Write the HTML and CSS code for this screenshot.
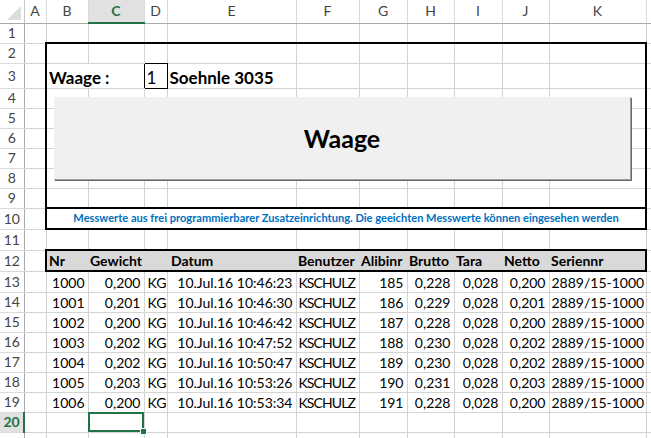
FILE: index.html
```html
<!DOCTYPE html>
<html lang="de">
<head>
<meta charset="utf-8">
<title>Waage</title>
<link rel="stylesheet" href="styles.css">
</head>
<body>
<div class="sheet">
<table class="grid">
<colgroup>
<col class="w-rh"><col class="w-a"><col class="w-b"><col class="w-c"><col class="w-d"><col class="w-e"><col class="w-f"><col class="w-g"><col class="w-h"><col class="w-i"><col class="w-j"><col class="w-k"><col class="w-l">
</colgroup>
<tr class="h-hdr">
<th class="corner"><svg width="14" height="14" viewBox="0 0 14 14"><polygon points="14,0 14,14 0,14" fill="#dcdcdc"/></svg></th>
<th class="ch">A</th><th class="ch">B</th><th class="ch csel">C</th><th class="ch">D</th><th class="ch">E</th><th class="ch">F</th><th class="ch">G</th><th class="ch">H</th><th class="ch">I</th><th class="ch">J</th><th class="ch">K</th><th class="ch"></th>
</tr>
<tr class="h20"><th class="rh">1</th><td></td><td></td><td></td><td></td><td></td><td></td><td></td><td></td><td></td><td></td><td></td><td></td></tr>
<tr class="h20"><th class="rh">2</th><td></td><td class="bl bt"></td><td class="bt"></td><td class="bt bbk"></td><td class="bt"></td><td class="bt"></td><td class="bt"></td><td class="bt"></td><td class="bt"></td><td class="bt"></td><td class="bt br2"></td><td></td></tr>
<tr class="h25"><th class="rh">3</th><td></td><td class="bl brk lbl" colspan="2">Waage :</td><td class="box">1</td><td class="lbl">Soehnle 3035</td><td></td><td></td><td></td><td></td><td></td><td class="br2"></td><td></td></tr>
<tr class="h20"><th class="rh">4</th><td></td><td class="bl"></td><td></td><td></td><td></td><td></td><td></td><td></td><td></td><td></td><td class="br2"></td><td></td></tr>
<tr class="h20"><th class="rh">5</th><td></td><td class="bl"></td><td></td><td></td><td></td><td></td><td></td><td></td><td></td><td></td><td class="br2"></td><td></td></tr>
<tr class="h20"><th class="rh">6</th><td></td><td class="bl"></td><td></td><td></td><td></td><td></td><td></td><td></td><td></td><td></td><td class="br2"></td><td></td></tr>
<tr class="h20"><th class="rh">7</th><td></td><td class="bl"></td><td></td><td></td><td></td><td></td><td></td><td></td><td></td><td></td><td class="br2"></td><td></td></tr>
<tr class="h20"><th class="rh">8</th><td></td><td class="bl"></td><td></td><td></td><td></td><td></td><td></td><td></td><td></td><td></td><td class="br2"></td><td></td></tr>
<tr class="h20"><th class="rh">9</th><td></td><td class="bl bb2"></td><td class="bb2"></td><td class="bb2"></td><td class="bb2"></td><td class="bb2"></td><td class="bb2"></td><td class="bb2"></td><td class="bb2"></td><td class="bb2"></td><td class="bb2 br2"></td><td></td></tr>
<tr class="h21"><th class="rh">10</th><td></td><td class="note" colspan="10">Messwerte aus frei programmierbarer Zusatzeinrichtung. Die geeichten Messwerte können eingesehen werden</td><td></td></tr>
<tr class="h21"><th class="rh">11</th><td></td><td></td><td></td><td></td><td></td><td></td><td></td><td></td><td></td><td></td><td></td><td></td></tr>
<tr class="h21"><th class="rh">12</th><td></td><td class="hc bl">Nr</td><td class="hc">Gewicht</td><td class="hc"></td><td class="hc hd">Datum</td><td class="hc">Benutzer</td><td class="hc">Alibinr</td><td class="hc">Brutto</td><td class="hc">Tara</td><td class="hc">Netto</td><td class="hc br2">Seriennr</td><td></td></tr>
<tr class="h21"><th class="rh">13</th><td></td><td class="n">1000</td><td class="n">0,200</td><td>KG</td><td class="n">10.Jul.16 10:46:23</td><td class="u k">KSCHULZ</td><td class="n">185</td><td class="n">0,228</td><td class="n">0,028</td><td class="n">0,200</td><td class="u">2889/15-1000</td><td></td></tr>
<tr class="h20"><th class="rh">14</th><td></td><td class="n">1001</td><td class="n">0,201</td><td>KG</td><td class="n">10.Jul.16 10:46:30</td><td class="u k">KSCHULZ</td><td class="n">186</td><td class="n">0,229</td><td class="n">0,028</td><td class="n">0,201</td><td class="u">2889/15-1000</td><td></td></tr>
<tr class="h20"><th class="rh">15</th><td></td><td class="n">1002</td><td class="n">0,200</td><td>KG</td><td class="n">10.Jul.16 10:46:42</td><td class="u k">KSCHULZ</td><td class="n">187</td><td class="n">0,228</td><td class="n">0,028</td><td class="n">0,200</td><td class="u">2889/15-1000</td><td></td></tr>
<tr class="h20"><th class="rh">16</th><td></td><td class="n">1003</td><td class="n">0,202</td><td>KG</td><td class="n">10.Jul.16 10:47:52</td><td class="u k">KSCHULZ</td><td class="n">188</td><td class="n">0,230</td><td class="n">0,028</td><td class="n">0,202</td><td class="u">2889/15-1000</td><td></td></tr>
<tr class="h20"><th class="rh">17</th><td></td><td class="n">1004</td><td class="n">0,202</td><td>KG</td><td class="n">10.Jul.16 10:50:47</td><td class="u k">KSCHULZ</td><td class="n">189</td><td class="n">0,230</td><td class="n">0,028</td><td class="n">0,202</td><td class="u">2889/15-1000</td><td></td></tr>
<tr class="h20"><th class="rh">18</th><td></td><td class="n">1005</td><td class="n">0,203</td><td>KG</td><td class="n">10.Jul.16 10:53:26</td><td class="u k">KSCHULZ</td><td class="n">190</td><td class="n">0,231</td><td class="n">0,028</td><td class="n">0,203</td><td class="u">2889/15-1000</td><td></td></tr>
<tr class="h20"><th class="rh">19</th><td></td><td class="n">1006</td><td class="n">0,200</td><td>KG</td><td class="n">10.Jul.16 10:53:34</td><td class="u k">KSCHULZ</td><td class="n">191</td><td class="n">0,228</td><td class="n">0,028</td><td class="n">0,200</td><td class="u">2889/15-1000</td><td></td></tr>
<tr class="h20"><th class="rh rsel">20</th><td></td><td></td><td class="sel"></td><td></td><td></td><td></td><td></td><td></td><td></td><td></td><td></td><td></td></tr>
<tr class="h20"><th class="rh"></th><td></td><td></td><td></td><td></td><td></td><td></td><td></td><td></td><td></td><td></td><td></td><td></td></tr>
</table>
<div class="btn">Waage</div>
</div>
</body>
</html>
```
FILE: styles.css
```css
html, body {
  margin: 0;
  padding: 0;
  background: #ffffff;
  overflow: hidden;
}
.sheet {
  position: relative;
  width: 651px;
  height: 438px;
  overflow: hidden;
}
.grid {
  border-collapse: collapse;
  table-layout: fixed;
  width: 706px;
  font-family: Lato, "Open Sans", sans-serif;
  font-size: 14px;
  color: #000;
}
.w-rh { width: 24px; }
.w-a { width: 22px; }
.w-b { width: 42px; }
.w-c { width: 56px; }
.w-d { width: 23px; }
.w-e { width: 129px; }
.w-f { width: 63px; }
.w-g { width: 48px; }
.w-h { width: 47px; }
.w-i { width: 48px; }
.w-j { width: 47px; }
.w-k { width: 97px; }
.w-l { width: 60px; }

.h-hdr { height: 23px; }
.h20 { height: 20px; }
.h21 { height: 21px; }
.h25 { height: 25px; }

td {
  padding: 0 3px 1px 3px;
  border-right: 1px solid #d4d4d4;
  border-bottom: 1px solid #d4d4d4;
  vertical-align: bottom;
  line-height: 17px;
  white-space: nowrap;
  overflow: visible;
}
th {
  padding: 0;
  font-weight: normal;
  white-space: nowrap;
}
.corner {
  border-right: 1px solid #c6c6c6;
  border-bottom: 1px solid #ababab;
  text-align: right;
  vertical-align: bottom;
  line-height: 0;
}
.corner svg {
  margin: 0 3px 3px 0;
}
.ch {
  border-right: 1px solid #dadada;
  border-bottom: 1px solid #ababab;
  color: #444;
  font-size: 14px;
  text-align: center;
  vertical-align: middle;
  line-height: 20px;
}
.csel {
  background: #e1e1e1;
  color: #217346;
  font-weight: bold;
  border-bottom: 2px solid #217346;
}
.rh {
  border-right: 1px solid #ababab;
  border-bottom: 1px solid #dadada;
  color: #444;
  font-size: 14px;
  text-align: center;
  vertical-align: middle;
  line-height: 18px;
}
.rsel {
  background: #e1e1e1;
  color: #217346;
  font-weight: bold;
  border-right: 2px solid #217346;
}

.bl { border-left: 2px solid #000; }
.bt { border-top: 2px solid #000; }
.br2 { border-right: 2px solid #000; }
.bb2 { border-bottom: 2px solid #000; }
.bbk { border-bottom: 1px solid #000; }
.brk { border-right: 1px solid #000; }

.lbl {
  font-weight: bold;
  font-size: 17px;
  padding-bottom: 2px;
  padding-left: 2px;
}
.box {
  border: 1px solid #000;
  padding-left: 2px;
  font-size: 17px;
  padding-bottom: 2px;
}
.note {
  border: 2px solid #000;
  color: #0070c0;
  font-weight: bold;
  font-size: 11.1px;
  text-align: center;
  padding-bottom: 2px;
}
.hc {
  background: #d9d9d9;
  font-weight: bold;
  border-top: 2px solid #000;
  border-bottom: 2px solid #000;
  border-right-style: none;
  padding-left: 2px;
}
.hc.hd { padding-left: 4px; }
.hc.br2 { border-right: 2px solid #000; }
.n { text-align: right; }
.u { padding-left: 2px; }
.k { letter-spacing: -0.9px; }

.sel {
  position: relative;
  outline: 2px solid #217346;
  outline-offset: -2px;
}
.sel::after {
  content: "";
  position: absolute;
  right: -3px;
  bottom: -3px;
  width: 5px;
  height: 5px;
  background: #217346;
  border: 1px solid #fff;
}

.btn {
  position: absolute;
  left: 54px;
  top: 97px;
  width: 577px;
  height: 83px;
  box-sizing: border-box;
  background: #f0f0f0;
  border-right: 1px solid #a0a0a0;
  border-bottom: 1px solid #a0a0a0;
  box-shadow: 1px 1px 0 #696969;
  display: flex;
  align-items: center;
  justify-content: center;
  font-family: Lato, "Open Sans", sans-serif;
  font-weight: bold;
  font-size: 25px;
  color: #000;
}
```
